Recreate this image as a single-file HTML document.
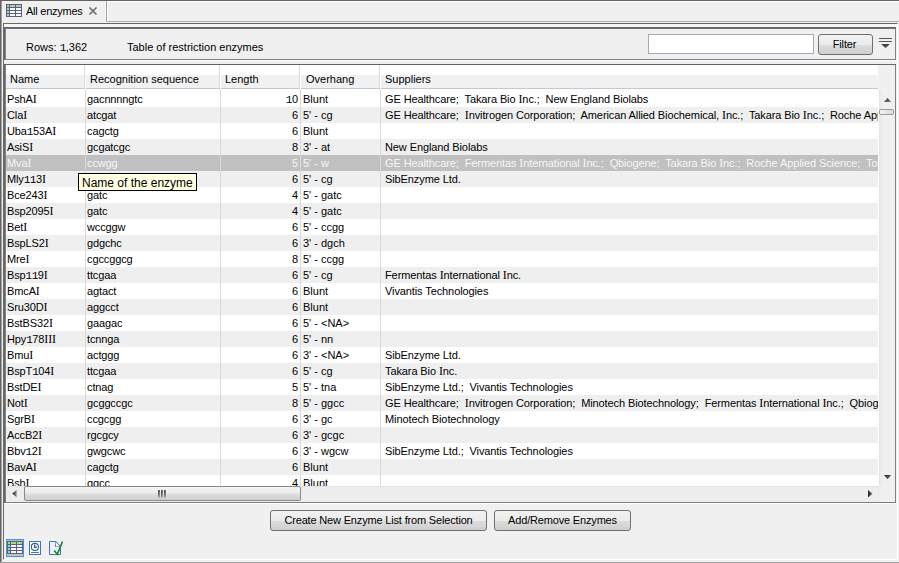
<!DOCTYPE html>
<html><head><meta charset="utf-8"><style>
*{margin:0;padding:0;box-sizing:border-box}
i{font-style:normal}
html,body{width:899px;height:563px;overflow:hidden;background:#f0f0f0;font-family:"Liberation Sans",sans-serif;font-size:11px;color:#000}
.a{position:absolute}
.t{position:absolute;white-space:pre;line-height:16px}
.r{position:absolute;left:6px;width:872px;height:16px;background:#fff;white-space:pre;line-height:16px}
.r.alt{background:#efefef}
.r.sel{background:#c0c0c0;color:#f6f6f6}
.r span{position:absolute;top:0;overflow:hidden}
.c0{left:1px;width:78px;letter-spacing:-0.12px}
.c1{left:81px;width:133px;letter-spacing:-0.12px}
.c2{left:215px;width:77px;text-align:right}
.c3{left:297px;width:77px}
.c4{left:379px;width:493px;letter-spacing:-0.1px}
.I{font-family:"Liberation Serif",serif;font-size:12px}
.one{font-family:"Liberation Mono",monospace;font-weight:normal;letter-spacing:-0.5px}
.vl{position:absolute;width:1px;background:#d8d8d8}
.btn{position:absolute;letter-spacing:-0.17px;border:1px solid #707070;border-radius:3px;background:linear-gradient(#f2f2f2 0%,#ebebeb 50%,#dddddd 51%,#cfcfcf 100%);text-align:center;line-height:18px}
</style></head><body>
<!-- window frame -->
<div class="a" style="left:0;top:0;width:899px;height:1px;background:#646464"></div>
<div class="a" style="left:0;top:0;width:1px;height:563px;background:#646464"></div>
<div class="a" style="left:1px;top:1px;width:1px;height:562px;background:#a0a0a0"></div>
<div class="a" style="left:0;top:562px;width:899px;height:1px;background:#a0a0a0"></div>
<!-- tab strip -->
<div class="a" style="left:106px;top:1px;width:793px;height:21px;border-left:1px solid #a0a0a0;border-bottom:1px solid #b0b0b0"></div>
<div class="a" style="left:107px;top:1px;width:792px;height:20px;border-left:1px solid #fff;border-top:1px solid #fff"></div>
<div class="a" style="left:105px;top:1px;width:1px;height:21px;background:#f8f8f8"></div>
<svg class="a" style="left:6px;top:4px" width="16" height="13" viewBox="0 0 16 13" shape-rendering="crispEdges">
<rect x="0" y="0" width="16" height="13" fill="#5e5e84"/>
<rect x="1" y="1" width="2" height="2" fill="#a4dc8c"/><rect x="4" y="1" width="5" height="2" fill="#a4dc8c"/><rect x="10" y="1" width="5" height="2" fill="#a4dc8c"/><rect x="1" y="4" width="2" height="2" fill="#a4dc8c"/><rect x="4" y="4" width="5" height="2" fill="#f4faff"/><rect x="10" y="4" width="5" height="2" fill="#f4faff"/><rect x="1" y="7" width="2" height="2" fill="#a4dc8c"/><rect x="4" y="7" width="5" height="2" fill="#f4faff"/><rect x="10" y="7" width="5" height="2" fill="#f4faff"/><rect x="1" y="10" width="2" height="2" fill="#a4dc8c"/><rect x="4" y="10" width="5" height="2" fill="#f4faff"/><rect x="10" y="10" width="5" height="2" fill="#f4faff"/>
</svg>
<div class="t" style="left:26px;top:3px;letter-spacing:-0.25px">All enzymes</div>
<svg class="a" style="left:88px;top:6px" width="10" height="10" viewBox="0 0 10 10"><path d="M1.5 1.5L8.5 8.5M8.5 1.5L1.5 8.5" stroke="#6a6a6a" stroke-width="1.6"/></svg>
<!-- outer frame -->
<div class="a" style="left:3px;top:23px;width:895px;height:537px;border-left:1px solid #696969;border-top:1px solid #696969;border-right:1px solid #fff;border-bottom:1px solid #fff;background:#f0f0f0"></div>
<div class="a" style="left:4px;top:24px;width:893px;height:3px;background:#f6f6f6"></div>
<!-- toolbar panel -->
<div class="a" style="left:4px;top:27px;width:892px;height:33px;border-top:1px solid #646464;border-left:1px solid #6a6a6a;background:#f0f0f0"></div>
<div class="a" style="left:5px;top:28px;width:891px;height:32px;border-top:1px solid #6d7280;border-left:1px solid #7a808a;border-right:1px solid #7a808a;border-bottom:1px solid #7a808a"></div>
<div class="a" style="left:4px;top:60px;width:893px;height:1px;background:#fff"></div>
<div class="t" style="left:26px;top:39px">Rows: <b class="one">1</b>,362</div>
<div class="t" style="left:127px;top:39px">Table of restriction enzymes</div>
<div class="a" style="left:648px;top:34px;width:166px;height:20px;border:1px solid #a5a8b0;background:#fff"></div>
<div class="btn" style="left:818px;top:34px;width:55px;height:21px;padding-right:2px">Filter</div>
<svg class="a" style="left:879px;top:37px" width="13" height="12" viewBox="0 0 13 12"><rect x="0" y="1" width="13" height="1" fill="#555"/><rect x="0" y="4" width="13" height="1" fill="#555"/><path d="M2 7H11L6.5 11Z" fill="#444"/></svg>
<!-- table panel -->
<div class="a" style="left:4px;top:503px;width:893px;height:1px;background:#fff"></div>
<div class="a" style="left:4px;top:64px;width:892px;height:439px;border-top:1px solid #646464;border-left:1px solid #6a6a6a;background:#fff"></div>
<div class="a" style="left:5px;top:65px;width:891px;height:438px;border-left:1px solid #7a808a;border-right:1px solid #7a808a;border-bottom:1px solid #7a808a"></div>
<!-- header -->
<div class="a" style="left:6px;top:65px;width:872px;height:26px;background:linear-gradient(#fff 0px,#fff 10px,#f0f1f3 10px,#f0f1f3 23px,#c8c8c8 23px,#c8c8c8 24px,#fff 24px)"></div>
<div class="a" style="left:84px;top:65px;width:1px;height:23px;background:#dcdcdc"></div><div class="a" style="left:85px;top:65px;width:1px;height:24px;background:#fff"></div>
<div class="a" style="left:219px;top:65px;width:1px;height:23px;background:#dcdcdc"></div><div class="a" style="left:220px;top:65px;width:1px;height:24px;background:#fff"></div>
<div class="a" style="left:299px;top:65px;width:1px;height:23px;background:#dcdcdc"></div><div class="a" style="left:300px;top:65px;width:1px;height:24px;background:#fff"></div>
<div class="a" style="left:379px;top:65px;width:1px;height:23px;background:#dcdcdc"></div><div class="a" style="left:380px;top:65px;width:1px;height:24px;background:#fff"></div>
<div class="t" style="left:10px;top:71px">Name</div>
<div class="t" style="left:90px;top:71px">Recognition sequence</div>
<div class="t" style="left:225px;top:71px">Length</div>
<div class="t" style="left:306px;top:71px">Overhang</div>
<div class="t" style="left:385px;top:71px">Suppliers</div>
<!-- rows -->
<div class="a" style="left:6px;top:91px;width:873px;height:395px;overflow:hidden">
<div class="a" style="left:-6px;top:-91px;width:885px;height:500px">
<div class="r" style="top:91px"><span class="c0">PshA<i class="I">I</i></span><span class="c1">gacnnnngtc</span><span class="c2"><b class="one">1</b>0</span><span class="c3">Blunt</span><span class="c4">GE Healthcare;&nbsp; Takara Bio <i class="I">I</i>nc.;&nbsp; New England Biolabs</span></div>
<div class="r alt" style="top:107px"><span class="c0">Cla<i class="I">I</i></span><span class="c1">atcgat</span><span class="c2">6</span><span class="c3">5' - cg</span><span class="c4">GE Healthcare;&nbsp; <i class="I">I</i>nvitrogen Corporation;&nbsp; American Allied Biochemical, <i class="I">I</i>nc.;&nbsp; Takara Bio <i class="I">I</i>nc.;&nbsp; Roche Applied Science;&nbsp; Toyobo</span></div>
<div class="r" style="top:123px"><span class="c0">Uba<b class="one">1</b>53A<i class="I">I</i></span><span class="c1">cagctg</span><span class="c2">6</span><span class="c3">Blunt</span><span class="c4"></span></div>
<div class="r alt" style="top:139px"><span class="c0">AsiS<i class="I">I</i></span><span class="c1">gcgatcgc</span><span class="c2">8</span><span class="c3">3' - at</span><span class="c4">New England Biolabs</span></div>
<div class="r sel" style="top:155px"><span class="c0">Mva<i class="I">I</i></span><span class="c1">ccwgg</span><span class="c2">5</span><span class="c3">5' - w</span><span class="c4">GE Healthcare;&nbsp; Fermentas <i class="I">I</i>nternational <i class="I">I</i>nc.;&nbsp; Qbiogene;&nbsp; Takara Bio <i class="I">I</i>nc.;&nbsp; Roche Applied Science;&nbsp; Toyobo</span></div>
<div class="r alt" style="top:171px"><span class="c0">Mly<b class="one">1</b><b class="one">1</b>3<i class="I">I</i></span><span class="c1">ggcgcc</span><span class="c2">6</span><span class="c3">5' - cg</span><span class="c4">SibEnzyme Ltd.</span></div>
<div class="r" style="top:187px"><span class="c0">Bce243<i class="I">I</i></span><span class="c1">gatc</span><span class="c2">4</span><span class="c3">5' - gatc</span><span class="c4"></span></div>
<div class="r alt" style="top:203px"><span class="c0">Bsp2095<i class="I">I</i></span><span class="c1">gatc</span><span class="c2">4</span><span class="c3">5' - gatc</span><span class="c4"></span></div>
<div class="r" style="top:219px"><span class="c0">Bet<i class="I">I</i></span><span class="c1">wccggw</span><span class="c2">6</span><span class="c3">5' - ccgg</span><span class="c4"></span></div>
<div class="r alt" style="top:235px"><span class="c0">BspLS2<i class="I">I</i></span><span class="c1">gdgchc</span><span class="c2">6</span><span class="c3">3' - dgch</span><span class="c4"></span></div>
<div class="r" style="top:251px"><span class="c0">Mre<i class="I">I</i></span><span class="c1">cgccggcg</span><span class="c2">8</span><span class="c3">5' - ccgg</span><span class="c4"></span></div>
<div class="r alt" style="top:267px"><span class="c0">Bsp<b class="one">1</b><b class="one">1</b>9<i class="I">I</i></span><span class="c1">ttcgaa</span><span class="c2">6</span><span class="c3">5' - cg</span><span class="c4">Fermentas <i class="I">I</i>nternational <i class="I">I</i>nc.</span></div>
<div class="r" style="top:283px"><span class="c0">BmcA<i class="I">I</i></span><span class="c1">agtact</span><span class="c2">6</span><span class="c3">Blunt</span><span class="c4">Vivantis Technologies</span></div>
<div class="r alt" style="top:299px"><span class="c0">Sru30D<i class="I">I</i></span><span class="c1">aggcct</span><span class="c2">6</span><span class="c3">Blunt</span><span class="c4"></span></div>
<div class="r" style="top:315px"><span class="c0">BstBS32<i class="I">I</i></span><span class="c1">gaagac</span><span class="c2">6</span><span class="c3">5' - &lt;NA&gt;</span><span class="c4"></span></div>
<div class="r alt" style="top:331px"><span class="c0">Hpy<b class="one">1</b>78<i class="I">I</i><i class="I">I</i><i class="I">I</i></span><span class="c1">tcnnga</span><span class="c2">6</span><span class="c3">5' - nn</span><span class="c4"></span></div>
<div class="r" style="top:347px"><span class="c0">Bmu<i class="I">I</i></span><span class="c1">actggg</span><span class="c2">6</span><span class="c3">3' - &lt;NA&gt;</span><span class="c4">SibEnzyme Ltd.</span></div>
<div class="r alt" style="top:363px"><span class="c0">BspT<b class="one">1</b>04<i class="I">I</i></span><span class="c1">ttcgaa</span><span class="c2">6</span><span class="c3">5' - cg</span><span class="c4">Takara Bio <i class="I">I</i>nc.</span></div>
<div class="r" style="top:379px"><span class="c0">BstDE<i class="I">I</i></span><span class="c1">ctnag</span><span class="c2">5</span><span class="c3">5' - tna</span><span class="c4">SibEnzyme Ltd.;&nbsp; Vivantis Technologies</span></div>
<div class="r alt" style="top:395px"><span class="c0">Not<i class="I">I</i></span><span class="c1">gcggccgc</span><span class="c2">8</span><span class="c3">5' - ggcc</span><span class="c4">GE Healthcare;&nbsp; <i class="I">I</i>nvitrogen Corporation;&nbsp; Minotech Biotechnology;&nbsp; Fermentas <i class="I">I</i>nternational <i class="I">I</i>nc.;&nbsp; Qbiogene</span></div>
<div class="r" style="top:411px"><span class="c0">SgrB<i class="I">I</i></span><span class="c1">ccgcgg</span><span class="c2">6</span><span class="c3">3' - gc</span><span class="c4">Minotech Biotechnology</span></div>
<div class="r alt" style="top:427px"><span class="c0">AccB2<i class="I">I</i></span><span class="c1">rgcgcy</span><span class="c2">6</span><span class="c3">3' - gcgc</span><span class="c4"></span></div>
<div class="r" style="top:443px"><span class="c0">Bbv<b class="one">1</b>2<i class="I">I</i></span><span class="c1">gwgcwc</span><span class="c2">6</span><span class="c3">3' - wgcw</span><span class="c4">SibEnzyme Ltd.;&nbsp; Vivantis Technologies</span></div>
<div class="r alt" style="top:459px"><span class="c0">BavA<i class="I">I</i></span><span class="c1">cagctg</span><span class="c2">6</span><span class="c3">Blunt</span><span class="c4"></span></div>
<div class="r" style="top:475px"><span class="c0">Bsh<i class="I">I</i></span><span class="c1">ggcc</span><span class="c2">4</span><span class="c3">Blunt</span><span class="c4"></span></div>
</div>
</div>
<div class="vl" style="left:85px;top:89px;height:397px"></div>
<div class="vl" style="left:220px;top:89px;height:397px"></div>
<div class="vl" style="left:300px;top:89px;height:397px"></div>
<div class="vl" style="left:380px;top:89px;height:397px"></div>
<!-- vertical scrollbar -->
<div class="a" style="left:878px;top:65px;width:17px;height:26px;background:#f0f0f0"></div>
<div class="a" style="left:879px;top:91px;width:16px;height:395px;background:linear-gradient(90deg,#e2e2e2 0px,#e8e8e8 1px,#ececec 2px,#efefef 4px,#f0f0f0 100%)"></div>
<svg class="a" style="left:884px;top:97px" width="8" height="6" viewBox="0 0 8 6"><defs><linearGradient id="gu" x1="0" y1="0" x2="1" y2="1"><stop offset="0" stop-color="#222"/><stop offset="1" stop-color="#888"/></linearGradient></defs><path d="M0 5L3.6 1L7.2 5Z" fill="url(#gu)"/></svg>
<div class="a" style="left:879px;top:109px;width:15px;height:6px;border:1px solid #9a9a9a;border-radius:2px;background:linear-gradient(90deg,#f4f4f4,#d8d8d8)"></div>
<svg class="a" style="left:884px;top:475px" width="8" height="5" viewBox="0 0 8 5"><defs><linearGradient id="gd" x1="0" y1="0" x2="1" y2="1"><stop offset="0" stop-color="#222"/><stop offset="1" stop-color="#777"/></linearGradient></defs><path d="M0 0L7.2 0L3.6 4.2Z" fill="url(#gd)"/></svg>
<!-- horizontal scrollbar -->
<div class="a" style="left:6px;top:486px;width:889px;height:16px;background:#ededed;border-top:1px solid #e3e3e3"></div>
<svg class="a" style="left:12px;top:490px" width="5" height="8" viewBox="0 0 5 8"><defs><linearGradient id="gl" x1="0" y1="0" x2="1" y2="0"><stop offset="0" stop-color="#222"/><stop offset="1" stop-color="#888"/></linearGradient></defs><path d="M4.6 0L0.2 3.5L4.6 7.2Z" fill="url(#gl)"/></svg>
<div class="a" style="left:24px;top:486px;width:277px;height:15px;border:1px solid #8a8a8a;border-radius:2px;background:linear-gradient(#f3f3f3 0%,#ececec 45%,#dcdcdc 55%,#cfcfcf 100%)"></div>
<svg class="a" style="left:157px;top:490px" width="10" height="8" viewBox="0 0 10 8"><defs><linearGradient id="gg" x1="0" y1="0" x2="0" y2="1"><stop offset="0" stop-color="#3a3a3a"/><stop offset="1" stop-color="#9a9a9a"/></linearGradient></defs><rect x="1" y="0" width="1.8" height="7.5" rx="0.6" fill="url(#gg)"/><rect x="4" y="0" width="1.8" height="7.5" rx="0.6" fill="url(#gg)"/><rect x="7" y="0" width="1.8" height="7.5" rx="0.6" fill="url(#gg)"/></svg>
<div class="a" style="left:878px;top:486px;width:17px;height:16px;background:#f0f0f0;border-left:1px solid #e6e6e6"></div>
<svg class="a" style="left:868px;top:490px" width="5" height="8" viewBox="0 0 5 8"><defs><linearGradient id="gr" x1="0" y1="0" x2="1" y2="0"><stop offset="0" stop-color="#222"/><stop offset="1" stop-color="#777"/></linearGradient></defs><path d="M0 0L4.5 3.75L0 7.5Z" fill="url(#gr)"/></svg>
<!-- tooltip -->
<div class="a" style="left:78px;top:173px;width:119px;height:18px;border:1px solid #000;background:#ffffe1;font-size:12px;line-height:16px;padding-left:3px;padding-top:1px;white-space:pre">Name of the enzyme</div>
<!-- buttons -->
<div class="btn" style="left:270px;top:510px;width:217px;height:21px">Create New Enzyme List from Selection</div>
<div class="btn" style="left:494px;top:510px;width:137px;height:21px">Add/Remove Enzymes</div>
<!-- bottom icons -->
<div class="a" style="left:6px;top:539px;width:18px;height:18px;border:1px solid #3399ff;background:#fdf3ea"></div>
<svg class="a" style="left:7px;top:540px" width="16" height="16" viewBox="0 0 16 16" shape-rendering="crispEdges">
<rect x="0" y="0" width="16" height="16" fill="#5e5e84"/><rect x="0" y="0" width="16" height="1" fill="#c8bcb0"/><rect x="0" y="14" width="16" height="2" fill="#ccc0b6"/>
<rect x="1" y="2" width="2" height="2" fill="#a4dc8c"/><rect x="4" y="2" width="5" height="2" fill="#a4dc8c"/><rect x="10" y="2" width="5" height="2" fill="#a4dc8c"/><rect x="1" y="5" width="2" height="2" fill="#a4dc8c"/><rect x="4" y="5" width="5" height="2" fill="#f4faff"/><rect x="10" y="5" width="5" height="2" fill="#f4faff"/><rect x="1" y="8" width="2" height="2" fill="#a4dc8c"/><rect x="4" y="8" width="5" height="2" fill="#f4faff"/><rect x="10" y="8" width="5" height="2" fill="#f4faff"/><rect x="1" y="11" width="2" height="2" fill="#a4dc8c"/><rect x="4" y="11" width="5" height="2" fill="#f4faff"/><rect x="10" y="11" width="5" height="2" fill="#f4faff"/>
</svg>
<svg class="a" style="left:29px;top:541px" width="12" height="14" viewBox="0 0 12 14">
<rect x="0.5" y="0.5" width="11" height="13" fill="#fff" stroke="#3f77b0"/>
<circle cx="5.9" cy="5.9" r="3.5" fill="none" stroke="#2f5f90" stroke-width="1.1"/>
<rect x="5" y="3.6" width="1.3" height="3.2" fill="#2a5a8c"/><rect x="5" y="5.6" width="3" height="1.2" fill="#2a5a8c"/>
<rect x="2" y="11" width="8" height="1" fill="#3f77b0"/>
</svg>
<svg class="a" style="left:49px;top:541px" width="14" height="15" viewBox="0 0 14 15">
<path d="M0.5 0.5H6.5L11.5 5.5V13.5H0.5Z" fill="#eef2f8" stroke="#3f77b0"/>
<path d="M6.5 0.5V5.5H11.5" fill="none" stroke="#3f77b0"/><path d="M6.5 1L11 5.5H7Z" fill="#fff"/><path d="M7 0.5L11.5 5" fill="none" stroke="#3f77b0" stroke-dasharray="1 0.6"/>
<path d="M5.2 9.5L8.3 13.2L13.5 0.6" fill="none" stroke="#1a7f2c" stroke-width="1.6"/>
</svg>
</body></html>
